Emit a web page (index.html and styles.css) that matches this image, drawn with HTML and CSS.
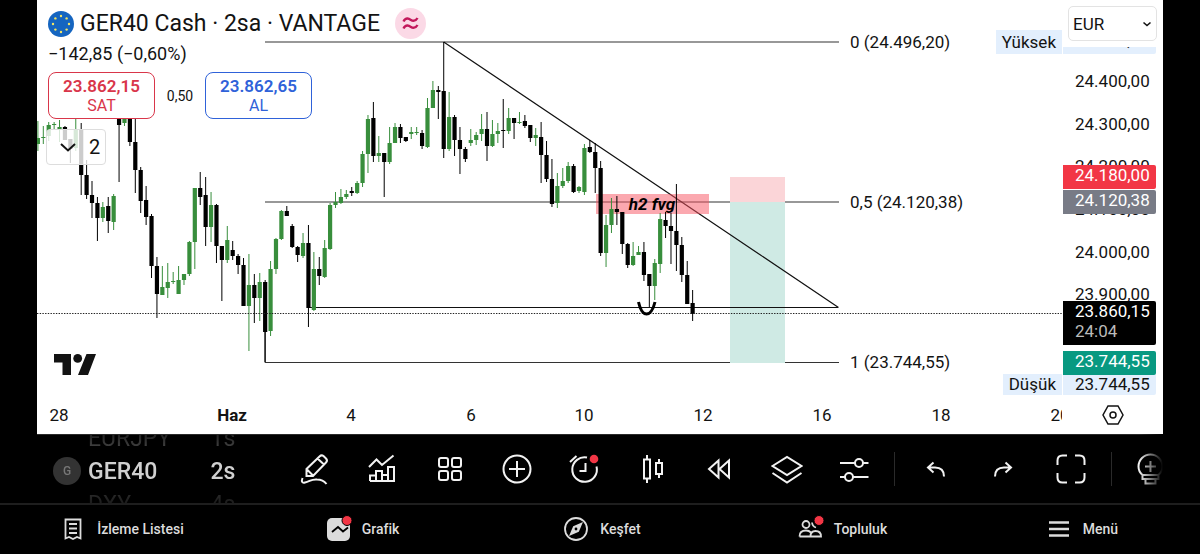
FILE: index.html
```html
<!DOCTYPE html>
<html lang="tr">
<head>
    <meta charset="UTF-8">
    <meta name="viewport" content="width=device-width, initial-scale=1.0">
    <title>GER40 Cash</title>
    <link rel="stylesheet" href="styles.css">
</head>
<body>
    <main class="chart">
        <section class="plot">
            <svg class="canvas" viewBox="0 0 1025 395">
                <path class="level" d="M228 42H802M228 202H802M228 362.500H802M228 332V362.500"/>
                <rect class="stop" x="693" y="177" width="55" height="25"/>
                <rect class="target" x="693" y="202" width="55" height="161"/>
                <path class="level trend" d="M406.700 42L801.500 307.500M273 307.500H801"/>
                <rect class="zone" x="559" y="194" width="113" height="20"/>
                <g id="candles"></g>
                <path class="price-line" d="M0 313.500H1025"/>
                <path class="hook" d="M601.500 302C605 318 614 318 618 302"/>
                <text class="zone-text" x="615" y="210">h2 fvg</text>
                <text x="813" y="48">0 (24.496,20)</text>
                <text x="813" y="208">0,5 (24.120,38)</text>
                <text x="813" y="368">1 (23.744,55)</text>
                <path class="logo" d="M17 354H34V375H25.500V362.500H17ZM49.500 354H59L51 375H41Z"/>
                <circle class="logo" cx="40.700" cy="358.400" r="4.400"/>
            </svg>
            <div class="legend">
                <div class="title-row">
                    <svg class="flag" viewBox="0 0 26 26">
                        <circle cx="13" cy="13" r="13" fill="#1565c0"/>
                        <g fill="#f5e663">
                            <circle cx="13" cy="5" r="1.200"/><circle cx="18.600" cy="7.400" r="1.200"/>
                            <circle cx="21" cy="13" r="1.200"/><circle cx="18.600" cy="18.600" r="1.200"/>
                            <circle cx="13" cy="21" r="1.200"/><circle cx="7.400" cy="18.600" r="1.200"/>
                            <circle cx="5" cy="13" r="1.200"/><circle cx="7.400" cy="7.400" r="1.200"/>
                        </g>
                    </svg>
                    <h1>GER40 Cash · 2sa · VANTAGE</h1>
                    <svg class="approx" viewBox="0 0 31 31">
                        <circle cx="15.500" cy="15.500" r="15.500"/>
                        <path d="M8.500 13.500C11 8.500 14.500 11 16 12S20.500 13.500 22.500 10M8.500 20.500C11 15.500 14.500 18 16 19S20.500 20.500 22.500 17"/>
                    </svg>
                </div>
                <p class="change">−142,85 (−0,60%)</p>
                <div class="trade">
                    <button class="sell"><b>23.862,15</b>SAT</button>
                    <span class="spread">0,50</span>
                    <button class="buy"><b>23.862,65</b>AL</button>
                </div>
                <button class="collapse">
                    <svg viewBox="0 0 20 20"><path d="M3 7L10 13.500L17 7"/></svg>2
                </button>
            </div>
            <span class="tag high">Yüksek</span>
            <span class="tag low">Düşük</span>
        </section>
        <section class="price-axis">
            <div id="prices"></div>
            <div class="currency">
                <select aria-label="Para birimi"><option>EUR</option></select>
                <svg viewBox="0 0 10 10"><path d="M1.500 3.500L5 6.500L8.500 3.500"/></svg>
            </div>
        </section>
        <section class="time-axis" id="timeAxis"></section>
        <button class="axis-settings" aria-label="Ayarlar">
            <svg viewBox="0 0 24 24"><path d="M7 3H17L22 12L17 21H7L2 12Z"/><circle cx="12" cy="12" r="3"/></svg>
        </button>
    </main>

    <div class="toolbar">
        <div class="wheel">
            <div class="wheel-row dim"><span></span><span>EURJPY</span><span>1s</span></div>
            <div class="wheel-row"><span class="avatar">G</span><span>GER40</span><span>2s</span></div>
            <div class="wheel-row dim next"><span></span><span>DXY</span><span>4s</span></div>
        </div>
        <div class="tools">
            <button aria-label="Çizim"><svg viewBox="0 0 32 32"><path d="M7.500 23V16L20.500 3.500Q22.500 1.500 24.500 3L27 5.500Q29 7.500 27 9.500L14 23ZM18.500 5.500L25 11.500M7.500 16L14 22.500M3.500 25Q1.500 30.500 6 29.500C11 28.500 12 26 18 26.500Q24 26.500 27.500 31"/></svg></button>
            <button aria-label="Göstergeler"><svg viewBox="0 0 32 32"><path d="M3 14L10.500 6.500L16 12L27.500 2.500M4 28V22.500H10V28M10 22.500V18H16V28M16 22H22V28M22 22V14H28V28H4"/></svg></button>
            <button aria-label="Düzen"><svg viewBox="0 0 32 32"><rect x="5" y="5" width="9" height="9" rx="2"/><rect x="18" y="5" width="9" height="9" rx="2"/><rect x="5" y="18" width="9" height="9" rx="2"/><rect x="18" y="18" width="9" height="9" rx="2"/></svg></button>
            <button aria-label="Ekle"><svg viewBox="0 0 32 32"><circle cx="16" cy="16" r="13.500"/><path d="M16 8V24M8 16H24"/></svg></button>
            <button aria-label="Alarm"><svg viewBox="0 0 32 32"><path d="M19 4.500A12.300 12.300 0 1 0 28.500 13.500M17.500 10V18H11.500M2 9L8.500 3"/><circle class="dot" cx="26" cy="6" r="4.300"/></svg></button>
            <button aria-label="Grafik türü"><svg viewBox="0 0 32 32"><rect x="8" y="6.500" width="6" height="19"/><path d="M11 2V6.500M11 25.500V30M23 6V10M23 21V25"/><rect x="20" y="10" width="6" height="11"/></svg></button>
            <button aria-label="Tekrar oynat"><svg viewBox="0 0 32 32"><path d="M15.500 7.500V24.500L6 16ZM26 7.500V24.500L16.500 16Z"/></svg></button>
            <button aria-label="Nesneler"><svg viewBox="0 0 32 32"><path d="M1.500 13L16 4L30.500 13L16 22ZM1.500 20L16 29.500L30.500 20"/></svg></button>
            <button aria-label="Seçenekler"><svg viewBox="0 0 32 32"><path d="M2 10H17M25 10H30.500M2 24H7M15 24H30.500"/><circle cx="21" cy="10" r="4"/><circle cx="11" cy="24" r="4"/></svg></button>
        </div>
        <i class="sep"></i>
        <div class="history">
            <button aria-label="Geri al"><svg viewBox="0 0 32 32"><path d="M14.500 9.500L9 14.500L14.500 19.500M9 14.500H16Q25 14.500 25 23.500"/></svg></button>
            <button aria-label="Yinele"><svg viewBox="0 0 32 32"><path d="M18.500 9.500L24 14.500L18.500 19.500M24 14.500H17Q8 14.500 8 23.500"/></svg></button>
            <button aria-label="Tam ekran"><svg viewBox="0 0 32 32"><path d="M2.500 12V7.500Q2.500 2.500 7.500 2.500H12M20 2.500H24.500Q29.500 2.500 29.500 7.500V12M29.500 20V24.500Q29.500 29.500 24.500 29.500H20M12 29.500H7.500Q2.500 29.500 2.500 24.500V20"/></svg></button>
        </div>
        <i class="sep"></i>
        <button class="idea" aria-label="Fikir"><svg viewBox="0 0 32 32"><path d="M9.500 22Q5.500 18.500 5.500 13.500A12 12 0 0 1 29.500 13.500Q29.500 18.500 25.500 22ZM17.500 8V19M12 13.500H23M9.500 22V26H25.500V22M12.500 26V30.500H22.500V26"/></svg></button>
    </div>

    <nav class="tabs">
        <a href="#"><svg viewBox="0 0 28 28"><path d="M6.500 4.500H21.500V23.500L18 22L14 24L10 22L6.500 23.500ZM10 9H18M10 13.500H18M10 18H18"/></svg>İzleme Listesi</a>
        <a href="#"><svg viewBox="0 0 28 28"><rect class="solid" x="3" y="3" width="23" height="23" rx="5"/><path class="ink" d="M8 17L14 12L19 16.500L24 12.500"/><circle class="dot ring" cx="23" cy="5.500" r="5"/></svg>Grafik</a>
        <a href="#"><svg viewBox="0 0 28 28"><circle cx="14" cy="14" r="11"/><path class="solid" d="M21 7L16.800 16.800L7 21L11.200 11.200Z"/><circle class="pin" cx="14" cy="14" r="1.400"/></svg>Keşfet</a>
        <a href="#"><svg viewBox="0 0 28 28"><circle cx="10" cy="9.500" r="3.500"/><path d="M3.500 21.500Q3.500 15.500 10 15.500Q13 15.500 15 17.500M3.500 21.500H14.500M14.500 21.500Q14.500 16 19.500 16Q25 16 25 21.500ZM16 7.500Q16.500 11.500 20 12.500"/><circle class="dot ring" cx="23" cy="5.500" r="5"/></svg>Topluluk</a>
        <a href="#"><svg viewBox="0 0 28 28"><path class="bars" d="M4 7.500H24M4 14H24M4 20.500H24"/></svg>Menü</a>
    </nav>

    <script>
        const PLOT_W=1025;
        const PLOT_H=395;
        const STEP=5.411;

        // [up, high, low, body top, body bottom]
        const candles=[
            [1,121,151,138,144],[1,126,144,137,138],[1,122,141,125,136],[1,122,130,124,125],[1,120,142,127,130],
            [0,126,140,127,140],[0,139,163,139,149],[1,119,151,129,148],[0,123,195,129,175],[0,160,199,175,195],
            [0,181,218,195,203],[0,197,241,203,218],[1,202,222,207,218],[0,197,233,206,221],[1,194,230,196,222],
            [0,112,182,118,125],[1,112,126,118,123],[0,110,146,112,142],[0,115,193,142,170],[0,167,213,170,201],
            [0,186,225,200,217],[0,214,278,216,266],[0,257,318,266,294],[1,266,295,287,295],[1,263,298,282,288],
            [1,272,284,281,282],[1,266,294,280,294],[1,274,285,274,280],[1,241,276,242,274],[1,188,269,188,242],
            [0,172,205,188,197],[0,177,246,195,227],[1,192,242,205,227],[0,204,263,205,246],[0,246,301,246,260],
            [1,226,263,240,260],[0,241,260,250,256],[0,254,274,256,265],[0,258,306,265,306],[1,254,351,285,306],
            [0,274,323,285,298],[1,273,321,282,298],[0,280,362,282,332],[1,261,336,269,331],[1,238,274,239,269],
            [1,210,240,211,239],[0,206,216,211,216],[0,224,248,226,247],[0,246,262,247,255],[1,233,258,243,256],
            [0,225,327,243,308],[1,252,311,269,310],[0,257,285,269,276],[1,240,278,248,277],[1,203,250,205,249],
            [1,192,208,202,205],[1,189,204,197,203],[1,190,199,194,197],[0,187,196,191,193],[1,181,194,183,193],
            [1,151,187,154,183],[1,115,173,119,154],[0,102,162,118,156],[1,136,162,153,156],[0,153,197,153,162],
            [1,127,164,143,162],[1,123,143,127,143],[0,124,143,127,138],[0,137,142,137,141],[1,127,139,132,134],
            [1,127,135,132,133],[0,130,149,133,146],[1,98,148,108,147],[1,81,108,90,108],[0,86,119,90,92],
            [0,42,158,91,149],[1,92,151,117,149],[0,115,156,117,140],[0,127,174,140,149],[0,147,162,149,159],
            [1,129,146,140,143],[1,132,145,135,140],[1,114,141,129,134],[0,112,161,129,146],[1,120,147,134,146],
            [1,123,143,131,134],[0,99,148,130,131],[1,108,134,118,131],[0,118,139,118,123],[1,112,124,122,123],
            [0,115,128,121,126],[0,125,142,125,138],[1,128,146,135,138],[0,122,183,137,155],[0,141,182,155,179],
            [0,159,207,179,204],[1,173,208,186,203],[1,168,188,181,186],[1,162,183,166,181],[0,164,193,166,192],
            [1,186,193,187,191],[1,144,195,148,192],[0,140,153,147,152],[0,143,193,152,168],[0,161,256,168,253],
            [1,215,267,225,253],[1,198,233,209,225],[0,196,225,209,212],[0,212,254,212,244],[0,243,268,244,265],
            [1,242,266,256,265],[1,246,255,252,255],[0,242,281,252,275],[0,274,307,274,286],[1,259,300,263,286],
            [1,213,273,219,264],[0,212,238,220,226],[0,213,264,226,231],[0,184,271,231,245],[0,237,282,245,275],
            [0,261,304,275,304],[0,290,321,303,314]
        ];

        let shapes='';
        candles.forEach(([up,high,low,top,bottom],i) => {
            const x=0.9+i*STEP;
            shapes+=`<g class="${up?'up':'down'}"><path d="M${x} ${high}V${low}"/><rect x="${x-2.1}" y="${top}" width="4.2" height="${bottom-top}"/></g>`;
        });
        document.getElementById('candles').innerHTML=shapes;

        const priceY=price => 42+(24496.2-price)*0.4264;
        const priceList=document.getElementById('prices');
        // later labels lie over earlier ones
        const prices=[
            [24400,'24.400,00',''],[24300,'24.300,00',''],[24200,'24.200,00',''],[24100,'24.100,00',''],
            [24000,'24.000,00',''],[23900,'23.900,00',''],
            [24496.2,'24.496,20','pale'],[24180,'24.180,00','red'],[24120.38,'24.120,38','grey'],
            [23860.15,'23.860,15<small>24:04</small>','last'],
            [23690,'23.744,55','pale lowest'],[23744.55,'23.744,55','green']
        ];
        prices.forEach(([price,text,kind]) => {
            priceList.insertAdjacentHTML('beforeend',`<div class="price ${kind}" style="top:${priceY(price)/PLOT_H*100}%">${text}</div>`);
        });

        const timeAxis=document.getElementById('timeAxis');
        const times=[[22,'28'],[195,'<b>Haz</b>'],[314,'4'],[434,'6'],[547,'10'],[666,'12'],[785,'16'],[904,'18'],[1023,'20']];
        times.forEach(([x,text]) => {
            timeAxis.insertAdjacentHTML('beforeend',`<span style="left:${x/PLOT_W*100}%">${text}</span>`);
        });
    </script>
</body>
</html>
```
FILE: styles.css
```css
*{
    box-sizing: border-box;
}
body{
    margin: 0;
    background-color: #000;
    color: #131313;
    font-family: Roboto, "Noto Sans", sans-serif;
    font-size: 17px;
}
button{
    font: inherit;
    color: inherit;
    background: none;
    border: none;
    padding: 0;
    cursor: pointer;
}
svg{
    display: block;
    fill: none;
}
.chart{
    display: grid;
    grid-template-columns: 1fr 101px;
    grid-template-rows: auto 39px;
    margin: 0 37px;
    background-color: #fff;
}
.plot{
    position: relative;
}

/* drawings */
.canvas{
    width: 100%;
    height: auto;
}
.canvas text{
    fill: #131313;
}
.level{
    stroke: #333;
    stroke-width: 1.2;
}
.trend{
    stroke: #111;
}
.zone{
    fill: #f7525f;
    fill-opacity: 0.5;
}
.canvas .zone-text{
    font-size: 17px;
    font-weight: 700;
    font-style: italic;
    text-anchor: middle;
    fill: #000;
}
.up path{
    stroke: #388e3c;
}
.up rect{
    fill: #388e3c;
}
.down path{
    stroke: #000;
}
.down rect{
    fill: #000;
}
.price-line{
    stroke: #222;
    stroke-dasharray: 1.4 1.3;
}
.stop{
    fill: #fbd5d8;
}
.target{
    fill: #cfeae4;
}
.hook{
    stroke: #000;
    stroke-width: 3;
}
.logo{
    fill: #131313;
}

/* legend over the plot */
.legend{
    position: absolute;
    top: 8px;
    left: 11px;
}
.title-row{
    display: flex;
    align-items: center;
    height: 31px;
}
.flag{
    width: 26px;
    margin-right: 6px;
}
h1{
    margin: 0;
    font-size: 23px;
    font-weight: 400;
}
.approx{
    width: 31px;
    margin-left: 15px;
    fill: #fbd9e6;
}
.approx path{
    fill: none;
    stroke: #c2185b;
    stroke-width: 2.4;
}
.change{
    margin: 4px 0 7px;
    font-size: 18px;
    line-height: 22px;
}
.trade{
    display: flex;
    align-items: center;
}
.trade button{
    width: 107px;
    height: 47px;
    border: 1px solid;
    border-radius: 8px;
    background-color: #fff;
    font-size: 16px;
    line-height: 20px;
}
.trade b{
    display: block;
    font-size: 17px;
    font-weight: 600;
}
.trade .sell{
    color: #d9364a;
}
.trade .buy{
    color: #2f62d9;
}
.spread{
    width: 50px;
    font-size: 14px;
    text-align: center;
}
.collapse{
    display: flex;
    align-items: center;
    gap: 11px;
    width: 60px;
    height: 36px;
    margin-top: 10px;
    margin-left: -2px;
    padding-left: 11px;
    border: 1px solid #ddd;
    border-radius: 4px;
    background-color: rgba(255,255,255,0.8);
    font-size: 20px;
}
.collapse svg{
    width: 20px;
    stroke: #131313;
    stroke-width: 2;
}
.tag{
    position: absolute;
    right: 0;
    padding: 0 6px;
    background-color: #e3effd;
    line-height: 24px;
}
.high{
    top: 30px;
}
.low{
    bottom: 0;
    line-height: 21px;
}

/* axes */
.price-axis{
    position: relative;
}
.price{
    position: absolute;
    left: 1px;
    width: 93px;
    height: 24px;
    margin-top: -12px;
    padding-left: 12px;
    border-radius: 0 2px 2px 0;
    line-height: 21px;
}
.price small{
    display: block;
    font-size: 17px;
    line-height: 18px;
    color: #bbb;
}
.pale{
    background-color: #e3effd;
}
.lowest{
    height: 21px;
}
.red{
    background-color: #f23645;
    color: #fff;
}
.grey{
    background-color: #787b86;
    color: #fff;
}
.last{
    height: 44px;
    background-color: #000;
    color: #fff;
}
.green{
    background-color: #089981;
    color: #fff;
}
.currency{
    position: relative;
    display: flex;
    align-items: center;
    height: 47px;
    padding-left: 6px;
    background-color: #fff;
}
.currency select{
    appearance: none;
    width: 89px;
    height: 35px;
    padding: 0 4px;
    border: 1px solid #e3e3e3;
    border-radius: 5px;
    background-color: #fff;
    color: #131313;
    font: inherit;
}
.currency svg{
    width: 10px;
    margin-left: -15px;
    stroke: #131313;
    stroke-width: 1.6;
    pointer-events: none;
}
.time-axis{
    position: relative;
    overflow: hidden;
}
.time-axis span{
    position: absolute;
    line-height: 40px;
    transform: translateX(-50%);
}
.axis-settings svg{
    width: 24px;
    margin: 0 auto;
    stroke: #131313;
    stroke-width: 1.5;
}

/* toolbar */
.toolbar{
    display: flex;
    align-items: center;
    height: 69px;
    margin: 0 37px;
    border-top: 1px solid #2a2a2a;
    overflow: hidden;
    mask-image: linear-gradient(to left, transparent, #000 24px);
}
.wheel{
    width: 244px;
    padding: 4px 0 0 16px;
    font-size: 23px;
    font-weight: 500;
    color: #d0d0d0;
}
.wheel-row{
    display: grid;
    grid-template-columns: 30px 110px 40px;
    column-gap: 5px;
    align-items: center;
    height: 33px;
}
.wheel-row :last-child{
    text-align: center;
}
.wheel .dim{
    font-weight: 400;
    color: transparent;
    background-image: linear-gradient(#000, #555);
    background-clip: text;
}
.wheel .next{
    background-image: linear-gradient(#333, #000);
}
.avatar{
    width: 28px;
    border-radius: 50%;
    background-color: #333;
    color: #777;
    font-size: 12px;
    line-height: 28px;
    text-align: center;
}
.tools{
    display: flex;
    flex: 1;
}
.tools button{
    flex: 1;
}
.history{
    display: flex;
}
.history button{
    width: 68px;
}
.toolbar svg{
    width: 32px;
    margin: 0 auto;
    stroke: #f2f2f2;
    stroke-width: 2;
}
.sep{
    width: 1px;
    height: 34px;
    margin: 0 6px;
    background-color: #2a2a2a;
}
.idea{
    width: 45px;
    padding-left: 15px;
}
.toolbar .dot, .tabs .dot{
    fill: #f23645;
    stroke: none;
}

/* bottom tabs */
.tabs{
    display: grid;
    grid-template-columns: repeat(5,1fr);
    height: 50px;
    border-top: 2px solid #1e1e1e;
}
.tabs a{
    display: flex;
    align-items: center;
    justify-content: center;
    gap: 10px;
    padding-left: 3px;
    color: #dcdcdc;
    font-size: 14px;
    font-weight: 500;
    text-decoration: none;
}
.tabs svg{
    width: 28px;
    stroke: #dcdcdc;
    stroke-width: 1.8;
}
.tabs .solid{
    fill: #dcdcdc;
    stroke: none;
}
.tabs .ink{
    stroke: #000;
}
.tabs .ring{
    stroke: #000;
    stroke-width: 1;
}
.tabs .pin{
    fill: #000;
    stroke: none;
}
.tabs .bars{
    stroke-width: 2.4;
}
```
